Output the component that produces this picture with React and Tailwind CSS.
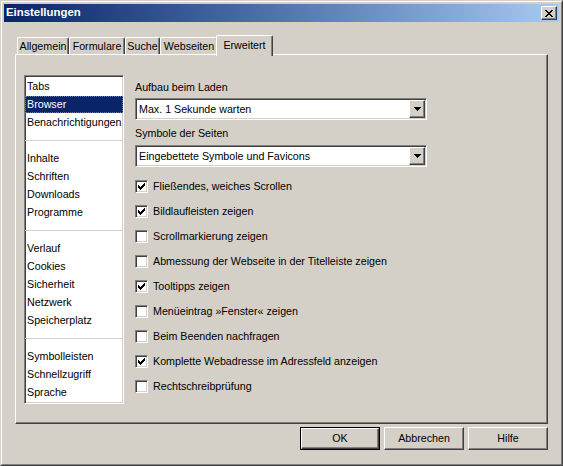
import React from "react";

const GROUPS = [
  ["Tabs", "Browser", "Benachrichtigungen"],
  ["Inhalte", "Schriften", "Downloads", "Programme"],
  ["Verlauf", "Cookies", "Sicherheit", "Netzwerk", "Speicherplatz"],
  ["Symbolleisten", "Schnellzugriff", "Sprache"],
];

const OPTIONS = [
  ["Fließendes, weiches Scrollen", true],
  ["Bildlaufleisten zeigen", true],
  ["Scrollmarkierung zeigen", false],
  ["Abmessung der Webseite in der Titelleiste zeigen", false],
  ["Tooltipps zeigen", true],
  ["Menüeintrag »Fenster« zeigen", false],
  ["Beim Beenden nachfragen", false],
  ["Komplette Webadresse im Adressfeld anzeigen", true],
  ["Rechtschreibprüfung", false],
];

const TABS = [
  ["Allgemein", "w-[52px]"],
  ["Formulare", "w-[56px]"],
  ["Suche", "w-[35px]"],
  ["Webseiten", "w-[58px]"],
];

// classic 3D edges
const sunken =
  "border border-t-[#808080] border-l-[#808080] border-r-white border-b-white shadow-[inset_1px_1px_0_#404040,inset_-1px_-1px_0_#d4d0c8]";
const raised =
  "border border-t-white border-l-white border-r-[#404040] border-b-[#404040] shadow-[inset_-1px_-1px_0_#808080]";

function CloseGlyph() {
  // 8x7 pixel cross
  const px = [
    [0, 0], [1, 0], [6, 0], [7, 0],
    [1, 1], [2, 1], [5, 1], [6, 1],
    [2, 2], [3, 2], [4, 2], [5, 2],
    [3, 3], [4, 3],
    [2, 4], [3, 4], [4, 4], [5, 4],
    [1, 5], [2, 5], [5, 5], [6, 5],
    [0, 6], [1, 6], [6, 6], [7, 6],
  ];
  return (
    <svg width="8" height="7" viewBox="0 0 8 7" shapeRendering="crispEdges">
      {px.map(([x, y]) => (
        <rect key={`${x}-${y}`} x={x} y={y} width="1" height="1" fill="#000" />
      ))}
    </svg>
  );
}

function CheckGlyph() {
  const cols = [2, 3, 4, 3, 2, 1, 0];
  return (
    <svg width="7" height="7" viewBox="0 0 7 7" shapeRendering="crispEdges">
      {cols.map((top, i) => (
        <rect key={i} x={i} y={top} width="1" height="3" fill="#000" />
      ))}
    </svg>
  );
}

function Checkbox({ checked }) {
  return (
    <div className={`w-[13px] h-[13px] bg-white flex items-center justify-center ${sunken}`}>
      {checked && <CheckGlyph />}
    </div>
  );
}

function Dropdown({ value }) {
  return (
    <div className={`w-[292px] h-[22px] bg-white flex items-stretch p-[1px] ${sunken}`}>
      <div className="flex-1 flex items-center pl-[2px]">{value}</div>
      <div className={`w-[16px] bg-[#d4d0c8] flex items-center justify-center ${raised}`}>
        <svg width="7" height="4" viewBox="0 0 7 4" shapeRendering="crispEdges">
          <path d="M0 0h7v1h-1v1h-1v1h-1v1h-1v-1h-1v-1h-1v-1h-1z" fill="#000" />
        </svg>
      </div>
    </div>
  );
}

function Button({ label, primary }) {
  if (primary) {
    return (
      <div className="w-[80px] h-[23px] border border-black">
        <div className={`w-full h-full flex items-center justify-center ${raised}`}>{label}</div>
      </div>
    );
  }
  return (
    <div className={`w-[80px] h-[23px] flex items-center justify-center ${raised}`}>{label}</div>
  );
}

export default function App() {
  return (
    <div className="w-[563px] h-[466px] bg-[#d4d0c8] text-black font-['Liberation_Sans',Arial,sans-serif] text-[10.7px] leading-none border border-t-[#d4d0c8] border-l-[#d4d0c8] border-r-[#404040] border-b-[#404040]">
      <div className="w-full h-full border border-t-white border-l-white border-r-[#808080] border-b-[#808080] p-[2px] flex flex-col">
        {/* caption */}
        <div className="h-[18px] bg-gradient-to-r from-[#0a246a] to-[#a6caf0] flex items-center justify-between pl-[2px] pr-[2px]">
          <span className="text-white font-bold text-[11.4px]">Einstellungen</span>
          <div className={`w-[16px] h-[14px] bg-[#d4d0c8] flex items-center justify-center ${raised}`}>
            <CloseGlyph />
          </div>
        </div>

        <div className="flex-1 flex flex-col px-[11px] pt-[13px] pb-[12px]">
          {/* tabs */}
          <div className="relative z-10 h-[21px] -mb-[2px] flex items-end pl-[2px]">
            {TABS.map(([t, w]) => (
              <div
                key={t}
                className={`${w} h-[17px] mb-[2px] flex items-center justify-center rounded-t-[2px] border-t border-l border-r border-t-white border-l-white border-r-[#404040] shadow-[inset_-1px_0_0_#808080]`}
              >
                {t}
              </div>
            ))}
            <div className="w-[57px] h-[21px] -ml-[2px] bg-[#d4d0c8] flex items-center justify-center pb-[2px] rounded-t-[2px] border-t border-l border-r border-t-white border-l-white border-r-[#404040] shadow-[inset_-1px_0_0_#808080]">
              Erweitert
            </div>
          </div>

          {/* panel */}
          <div className="h-[370px] flex items-start gap-[11px] pt-[20px] pl-[8px] border border-t-white border-l-white border-r-[#404040] border-b-[#404040] shadow-[inset_-1px_-1px_0_#808080]">
            <div className={`w-[100px] h-[329px] bg-white pt-[1px] ${sunken}`}>
              {GROUPS.map((group, gi) => (
                <div key={gi}>
                  {gi > 0 && (
                    <div className="h-[18px] flex items-center">
                      <div className="w-full h-px bg-[#d4d0c8]" />
                    </div>
                  )}
                  {group.map((item) => (
                    <div key={item} className="h-[18px] flex items-center">
                      {item === "Browser" ? (
                        <div className="w-full h-[17px] flex items-center pl-[1px] bg-[#0a246a] text-white border border-dotted border-[#6b7aa8]">
                          {item}
                        </div>
                      ) : (
                        <div className="pl-[2px]">{item}</div>
                      )}
                    </div>
                  ))}
                </div>
              ))}
            </div>

            <div className="flex flex-col">
              <div className="mt-[5px] h-[14px] flex items-center">Aufbau beim Laden</div>
              <div className="mt-[4px]">
                <Dropdown value="Max. 1 Sekunde warten" />
              </div>
              <div className="mt-[6px] h-[14px] flex items-center">Symbole der Seiten</div>
              <div className="mt-[5px]">
                <Dropdown value="Eingebettete Symbole und Favicons" />
              </div>
              <div className="mt-[7px] flex flex-col">
                {OPTIONS.map(([label, checked]) => (
                  <div key={label} className="h-[25px] flex items-center">
                    <Checkbox checked={checked} />
                    <span className="ml-[5px]">{label}</span>
                  </div>
                ))}
              </div>
            </div>
          </div>

          {/* dialog buttons */}
          <div className="mt-[3px] flex justify-end gap-[4px]">
            <Button label="OK" primary />
            <Button label="Abbrechen" />
            <Button label="Hilfe" />
          </div>
        </div>
      </div>
    </div>
  );
}
